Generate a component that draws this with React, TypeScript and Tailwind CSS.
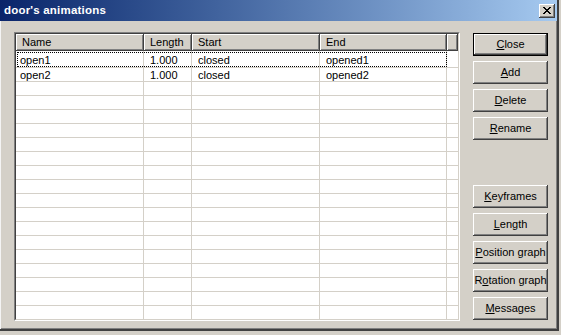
import React from 'react';

const raised =
  'shadow-[inset_-1px_-1px_0_#404040,inset_1px_1px_0_#ffffff,inset_-2px_-2px_0_#808080,inset_2px_2px_0_#d4d0c8]';

const rows = [
  ['open1', '1.000', 'closed', 'opened1'],
  ['open2', '1.000', 'closed', 'opened2'],
];

function Btn({ pre, key1, post, def }: { pre?: string; key1: string; post: string; def?: boolean }) {
  const inner = (
    <div className={`flex h-full w-full items-center justify-center bg-[#d4d0c8] text-[11px] text-black ${raised}`}>
      <span>
        {pre}
        <u className="decoration-1 underline-offset-[1px]">{key1}</u>
        {post}
      </span>
    </div>
  );
  if (def) {
    return <div className="h-[23px] w-[75px] border border-black">{inner}</div>;
  }
  return <div className="h-[23px] w-[75px]">{inner}</div>;
}

function XGlyph() {
  // classic 8x7 close cross
  const px: [number, number, number][] = [
    [0, 0, 2], [6, 0, 2],
    [1, 1, 2], [5, 1, 2],
    [2, 2, 4],
    [3, 3, 2],
    [2, 4, 4],
    [1, 5, 2], [5, 5, 2],
    [0, 6, 2], [6, 6, 2],
  ];
  return (
    <svg width="8" height="7" viewBox="0 0 8 7" shapeRendering="crispEdges">
      {px.map(([x, y, w], i) => (
        <rect key={i} x={x} y={y} width={w} height={1} fill="#000" />
      ))}
    </svg>
  );
}

function Cells({ data, first }: { data: string[]; first?: boolean }) {
  return (
    <>
      <div className={`w-[128px] shrink-0 border-r border-[#d4d0c8] pl-[4px] ${first ? 'pt-[3px]' : 'pt-[1px]'}`}>{data[0]}</div>
      <div className={`w-[48px] shrink-0 border-r border-[#d4d0c8] pl-[6px] ${first ? 'pt-[3px]' : 'pt-[1px]'}`}>{data[1]}</div>
      <div className={`w-[128px] shrink-0 border-r border-[#d4d0c8] pl-[6px] ${first ? 'pt-[3px]' : 'pt-[1px]'}`}>{data[2]}</div>
      <div className={`w-[127px] shrink-0 border-r border-[#d4d0c8] pl-[6px] ${first ? 'pt-[3px]' : 'pt-[1px]'}`}>{data[3]}</div>
    </>
  );
}

export default function App() {
  const allRows: string[][] = [];
  for (let i = 0; i < 20; i++) allRows.push(rows[i] ?? ['', '', '', '']);

  return (
    <div className="h-[335px] w-[561px] overflow-hidden bg-[#d4d0c8] font-['Liberation_Sans',Arial,sans-serif]">
      <div className="flex h-[331px] w-[559px] flex-col border-b-2 border-r-2 border-b-[#404040] border-r-[#404040] shadow-[inset_1px_0_0_#f4f4f4,inset_-1px_-1px_0_#808080]">
        {/* title bar */}
        <div className="flex h-[21px] shrink-0 items-center bg-gradient-to-r from-[#0a246a] to-[#a6caf0] pl-[4px] pr-[2px]">
          <span className="text-[11.5px] font-bold tracking-[0.2px] text-white">door's animations</span>
          <div className={`ml-auto flex h-[14px] w-[16px] items-center justify-center bg-[#d4d0c8] ${raised}`}>
            <XGlyph />
          </div>
        </div>

        {/* body */}
        <div className="flex pl-[14px] pt-[11px]">
          <div className="h-[289px] w-[446px] border-l border-t border-b border-r border-l-[#808080] border-t-[#808080] border-b-white border-r-white">
            <div className="flex h-full w-full flex-col overflow-hidden border-l border-t border-b border-r border-l-[#404040] border-t-[#404040] border-b-[#d4d0c8] border-r-[#d4d0c8] bg-white text-[11px] leading-[13px] text-black">
              {/* header */}
              <div className="flex h-[17px] shrink-0 bg-[#d4d0c8]">
                <div className={`flex w-[128px] shrink-0 items-center pl-[6px] ${raised}`}>Name</div>
                <div className={`flex w-[48px] shrink-0 items-center pl-[6px] ${raised}`}>Length</div>
                <div className={`flex w-[128px] shrink-0 items-center pl-[6px] ${raised}`}>Start</div>
                <div className={`flex w-[127px] shrink-0 items-center pl-[6px] ${raised}`}>End</div>
                <div className={`flex-1 ${raised}`} />
              </div>
              {/* rows */}
              {allRows.map((r, i) => (
                <div
                  key={i}
                  className={`flex shrink-0 border-b border-[#d4d0c8] ${i === 0 ? 'h-[17px]' : 'h-[14px]'}`}
                >
                  {i === 0 ? (
                    <div className="relative flex">
                      <Cells data={r} first />
                      <div className="pointer-events-none absolute bottom-0 left-[1px] right-0 top-[1px] border border-dotted border-black" />
                    </div>
                  ) : (
                    <Cells data={r} />
                  )}
                  <div className="flex-1" />
                </div>
              ))}
            </div>
          </div>

          {/* buttons */}
          <div className="ml-[13px] mt-[1px] flex h-[287px] flex-col justify-between">
            <div className="flex flex-col gap-[5px]">
              <Btn key1="C" post="lose" def />
              <Btn key1="A" post="dd" />
              <Btn key1="D" post="elete" />
              <Btn key1="R" post="ename" />
            </div>
            <div className="flex flex-col gap-[5px]">
              <Btn key1="K" post="eyframes" />
              <Btn key1="L" post="ength" />
              <Btn key1="P" post="osition graph" />
              <Btn pre="R" key1="o" post="tation graph" />
              <Btn key1="M" post="essages" />
            </div>
          </div>
        </div>
      </div>
    </div>
  );
}
